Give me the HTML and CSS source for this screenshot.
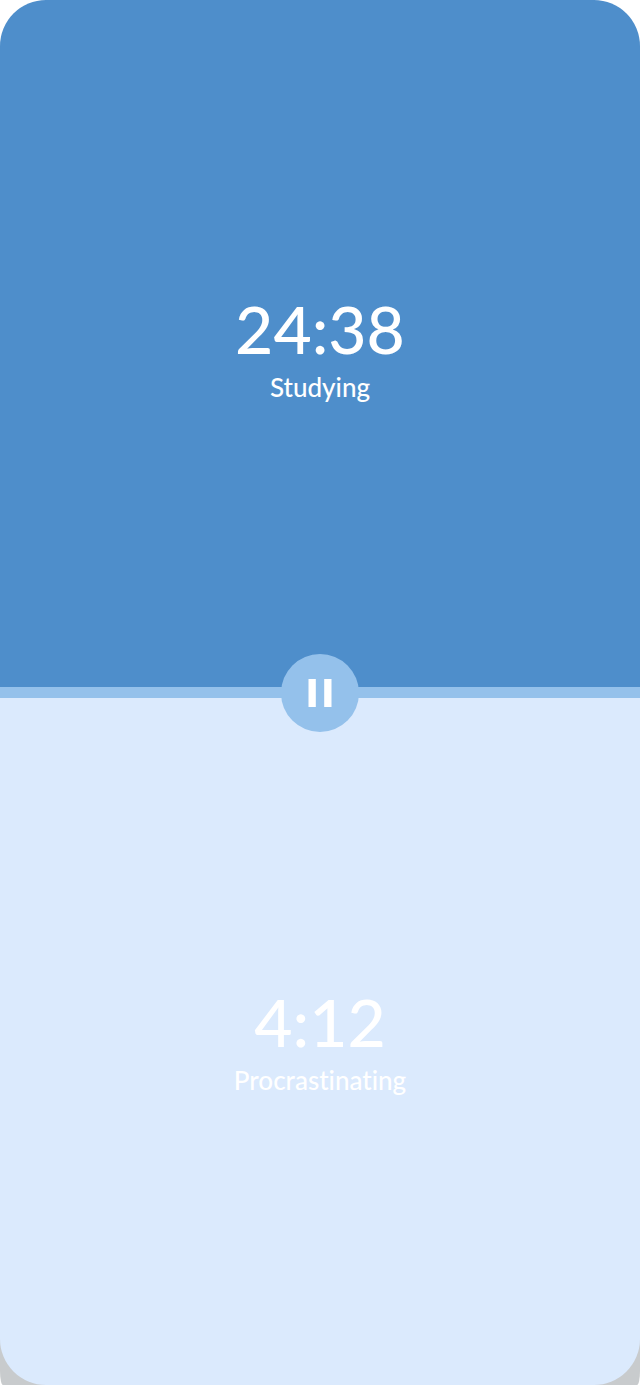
FILE: index.html
```html
<!DOCTYPE html>
<html lang="en">
<head>
<meta charset="utf-8">
<meta name="viewport" content="width=device-width, initial-scale=1">
<title>Study timer</title>
<link rel="stylesheet" href="styles.css">
</head>
<body>
<div class="backdrop">
<main class="timer">
  <section class="panel panel-active">
    <p class="time">24:38</p>
    <h2 class="label">Studying</h2>
  </section>
  <section class="panel panel-idle">
    <p class="time">4:12</p>
    <h2 class="label">Procrastinating</h2>
  </section>
  <div class="divider">
    <button class="pause" type="button" aria-label="Pause">
      <svg class="pause-icon" viewBox="0 0 24 28" aria-hidden="true"><path d="M.5 0h7.3v28H.5zM16.2 0h7.3v28h-7.3z" fill="currentColor"/></svg>
    </button>
  </div>
</main>
</div>
</body>
</html>
```
FILE: styles.css
```css
body {
  margin: 0;
  background: #fff;
  font-family: Lato, sans-serif;
  font-weight: 500;
  font-variant-ligatures: none;
  color: #fff;
}
.backdrop {
  background: linear-gradient(#fff 50%, #c8cbcd 50%);
  border-radius: 0 0 3px 3px / 0 0 14px 14px;
}
.timer {
  position: relative;
  display: flex;
  flex-direction: column;
  min-height: 100vh;
  border-radius: 46px;
  overflow: hidden;
}
.panel {
  flex: 1;
  display: flex;
  flex-direction: column;
  align-items: center;
  justify-content: center;
  gap: 2px;
  padding-top: 4px;
}
.panel-active { background: #4e8ecb; }
.panel-idle { background: #dbeafd; }
.time {
  margin: 0;
  font-size: 66px;
  line-height: 76px;
}
.label {
  margin: 0;
  font-size: 26px;
  line-height: 36px;
  font-weight: 500;
}
.divider {
  position: absolute;
  inset: 0;
  display: grid;
  place-items: center;
  background: linear-gradient(#94c1eb, #94c1eb) center / 100% 11px no-repeat;
}
.pause {
  display: grid;
  place-items: center;
  width: 78px;
  height: 78px;
  padding: 0;
  border: 0;
  border-radius: 50%;
  background: #94c1eb;
  color: #fff;
}
.pause-icon {
  width: 24px;
  height: 28px;
}
```
